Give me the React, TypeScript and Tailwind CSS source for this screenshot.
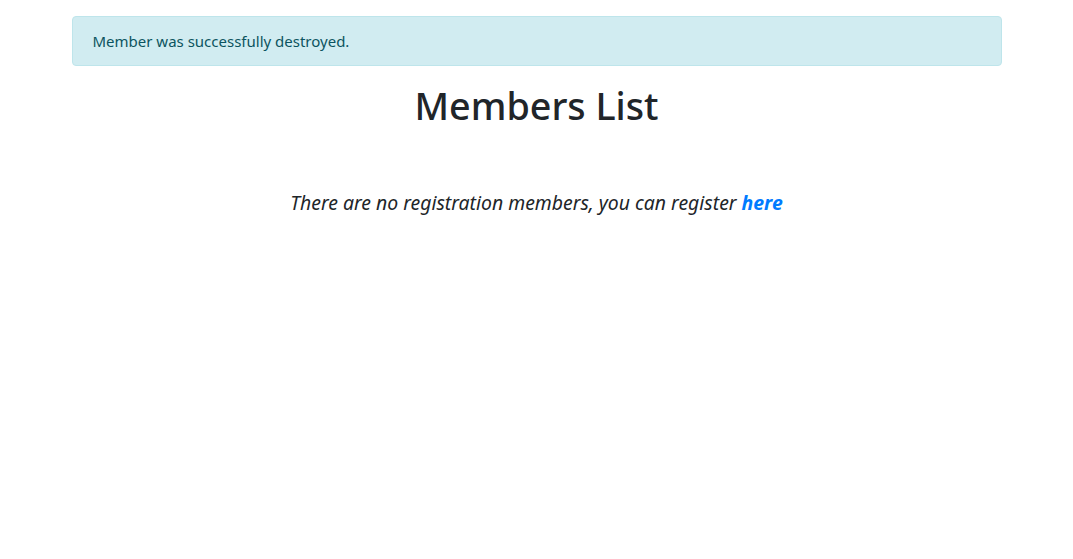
import React from 'react';

const App = () => {
  return (
    <div className="min-h-screen bg-white font-['Noto_Sans',sans-serif] text-[#212529]">
      <div className="mx-auto w-[960px] px-[15px] pt-4">
        <div className="mb-4 rounded-[4px] border border-[#bee5eb] bg-[#d1ecf1] px-5 py-3 text-[15px] leading-6 text-[#0c5460]">
          Member was successfully destroyed.
        </div>
        <h1 className="mb-2 text-center text-[37.7px] font-medium leading-[48px]">Members List</h1>
        <p className="mt-[58px] text-center text-[19.4px] italic leading-[30px]">
          There are no registration members, you can register{' '}
          <a href="#" className="font-bold text-[#007bff]">here</a>
        </p>
      </div>
    </div>
  );
};

export default App;
